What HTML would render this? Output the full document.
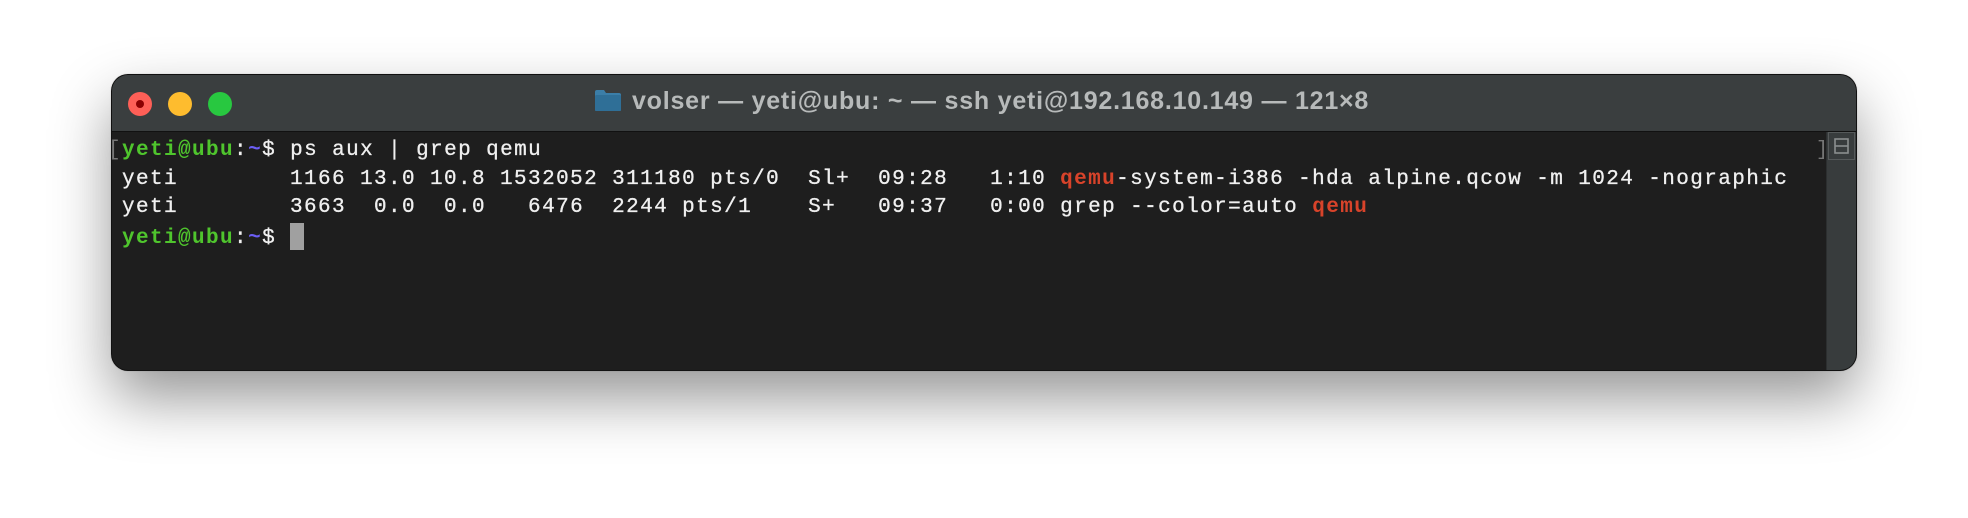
<!DOCTYPE html>
<html><head><meta charset="utf-8"><style>
html,body{margin:0;padding:0;background:#fff;width:1968px;height:518px;overflow:hidden;position:relative}
.win{position:absolute;left:112px;top:75px;width:1744px;height:295px;border-radius:16px;background:#1e1e1e;box-shadow:0 0 0 1px #111,0 28px 60px rgba(0,0,0,0.42),0 0 2px rgba(0,0,0,0.5);overflow:hidden}
.tb{position:absolute;left:0;top:0;width:100%;height:56px;background:#3a3e3f;border-bottom:1px solid #111}
.dot{position:absolute;top:17px;width:24px;height:24px;border-radius:50%}
.title{position:absolute;left:520px;top:12px;font:bold 25px "Liberation Sans",sans-serif;letter-spacing:0.78px;color:#b7baba;white-space:nowrap}
.folder{position:absolute;left:482px;top:14px;width:28px;height:23px}
.sb{position:absolute;right:0;top:57px;width:29px;height:238px;background:#383c3d;border-left:1px solid #2c2f30}
.sbb{position:absolute;left:1px;top:0;width:27px;height:28px;border:1px solid #55595a;box-sizing:border-box}
.term{position:absolute;left:-4px;top:62px;font:21px "Liberation Mono",monospace;letter-spacing:1.4px;line-height:28.5px;color:#f0f0f0;white-space:pre;-webkit-text-stroke:0.3px #f0f0f0}
.g{color:#4fc52d;font-weight:bold;-webkit-text-stroke:0}.b{color:#6c5ef5;font-weight:bold;-webkit-text-stroke:0}.r{color:#d8432a;font-weight:bold;-webkit-text-stroke:0}.d{color:#777;-webkit-text-stroke:0}
.cur{display:inline-block;width:14px;height:27px;background:#a0a0a0;vertical-align:-7px}
</style></head><body>
<div class="win">
 <div class="tb">
  <div class="dot" style="left:16px;background:#fe5f57"><div style="position:absolute;left:8px;top:8px;width:8px;height:8px;border-radius:50%;background:#8c0002"></div></div>
  <div class="dot" style="left:56px;background:#febc2e"></div>
  <div class="dot" style="left:96px;background:#28c840"></div>
  <svg class="folder" viewBox="0 0 28 23"><path d="M1 3 Q1 1 3 1 L10 1 L12 4 L25 4 Q27 4 27 6 L27 21 Q27 22 25 22 L3 22 Q1 22 1 21 Z" fill="#3b7ea8"/><rect x="1" y="6" width="26" height="16" rx="1.5" fill="#2f6f97"/></svg>
  <div class="title">volser — yeti@ubu: ~ — ssh yeti@192.168.10.149 — 121×8</div>
 </div>
 <div class="sb"><div class="sbb"><svg width="25" height="26" style="position:absolute;left:0;top:0"><rect x="6" y="6" width="13" height="14" fill="none" stroke="#8a8e8f" stroke-width="1.6"/><line x1="6" y1="13" x2="19" y2="13" stroke="#8a8e8f" stroke-width="1.6"/></svg></div></div>
 <div class="d" style="position:absolute;left:1704px;top:62px;font:20px 'Liberation Mono',monospace;line-height:28.5px">]</div>
 <div class="term"><span class="d">[</span><span class="g">yeti@ubu</span>:<span class="b">~</span>$ ps aux | grep qemu
 yeti        1166 13.0 10.8 1532052 311180 pts/0  Sl+  09:28   1:10 <span class="r">qemu</span>-system-i386 -hda alpine.qcow -m 1024 -nographic
 yeti        3663  0.0  0.0   6476  2244 pts/1    S+   09:37   0:00 grep --color=auto <span class="r">qemu</span>
 <span class="g">yeti@ubu</span>:<span class="b">~</span>$ <span class="cur"></span></div>
</div>
</body></html>
